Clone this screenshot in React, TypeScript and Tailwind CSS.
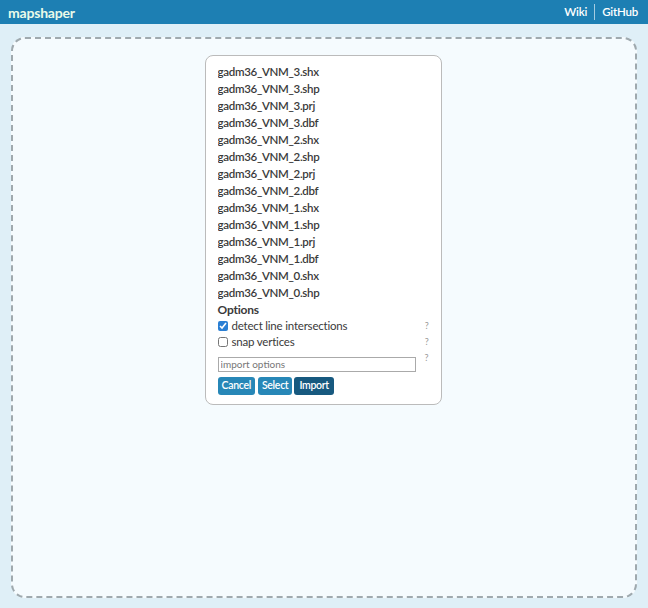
import { useState } from "react";

const files = [
  "gadm36_VNM_3.shx",
  "gadm36_VNM_3.shp",
  "gadm36_VNM_3.prj",
  "gadm36_VNM_3.dbf",
  "gadm36_VNM_2.shx",
  "gadm36_VNM_2.shp",
  "gadm36_VNM_2.prj",
  "gadm36_VNM_2.dbf",
  "gadm36_VNM_1.shx",
  "gadm36_VNM_1.shp",
  "gadm36_VNM_1.prj",
  "gadm36_VNM_1.dbf",
  "gadm36_VNM_0.shx",
  "gadm36_VNM_0.shp",
  "gadm36_VNM_0.prj",
  "gadm36_VNM_0.dbf",
];

export default function App() {
  const [detect, setDetect] = useState(true);
  const [snap, setSnap] = useState(false);

  return (
    <div className="flex h-[608px] w-[648px] flex-col bg-[#dfeff7] font-['Lato',sans-serif] text-[#3a3a3a]">
      <header className="flex h-[24px] items-center justify-between bg-[#1d7fb3] pl-[8px] pr-[10px]">
        <span className="text-[14px] font-bold tracking-[-0.2px] text-[#eafbe9]">mapshaper</span>
        <nav className="flex items-center text-[11.5px] font-semibold tracking-[-0.2px] text-white">
          <span>Wiki</span>
          <span className="mx-[7px] h-[16px] w-px bg-white/60" />
          <span>GitHub</span>
        </nav>
      </header>

      <main className="flex flex-1 px-[11px] pb-[10px] pt-[13px]">
        <div className="flex flex-1 justify-center rounded-[14px] border-2 border-dashed border-[#9fa9ae] bg-[#f5fbfe] pt-[16px]">
          <div className="-ml-[2px] h-[350px] w-[237px] rounded-[8px] border border-[#bbb] bg-white pl-[12px] pr-[12px] pt-[7px]">
            <ul className="h-[236px] overflow-hidden text-[11.5px] font-semibold leading-[17px] tracking-[-0.3px]">
              {files.map((f) => (
                <li key={f}>{f}</li>
              ))}
            </ul>
            <div className="mt-[2px] text-[12px] font-bold leading-[17px] tracking-[-0.2px]">Options</div>
            <label className="flex items-center text-[11.5px] leading-[16px] tracking-[-0.2px]">
              <input
                type="checkbox"
                checked={detect}
                onChange={(e) => setDetect(e.target.checked)}
                className="mr-[4px] h-[10px] w-[10px] accent-[#2a7fd4]"
              />
              <span className="flex-1">detect line intersections</span>
              <span className="text-[9px] text-[#999]">?</span>
            </label>
            <label className="flex items-center text-[11.5px] leading-[16px] tracking-[-0.2px]">
              <input
                type="checkbox"
                checked={snap}
                onChange={(e) => setSnap(e.target.checked)}
                className="mr-[4px] h-[10px] w-[10px]"
              />
              <span className="flex-1">snap vertices</span>
              <span className="text-[9px] text-[#999]">?</span>
            </label>
            <div className="mt-[7px] flex items-start">
              <input
                placeholder="import options"
                className="h-[15px] w-[198px] border border-[#aaa] px-[2px] text-[10px] text-[#444] placeholder:text-[#777] outline-none"
              />
              <span className="ml-auto -mt-[4px] text-[9px] leading-[10px] text-[#999]">?</span>
            </div>
            <div className="mt-[5px] flex gap-[3px]">
              <button className="h-[18px] rounded-[3px] bg-[#2787b7] px-[4px] text-[10.5px] font-semibold tracking-[-0.3px] text-white">
                Cancel
              </button>
              <button className="h-[18px] rounded-[3px] bg-[#2787b7] px-[4px] text-[10.5px] font-semibold tracking-[-0.3px] text-white">
                Select
              </button>
              <button className="-ml-[1px] h-[18px] rounded-[3px] bg-[#17597f] px-[5px] text-[10.5px] font-semibold tracking-[-0.3px] text-white">
                Import
              </button>
            </div>
          </div>
        </div>
      </main>
    </div>
  );
}
